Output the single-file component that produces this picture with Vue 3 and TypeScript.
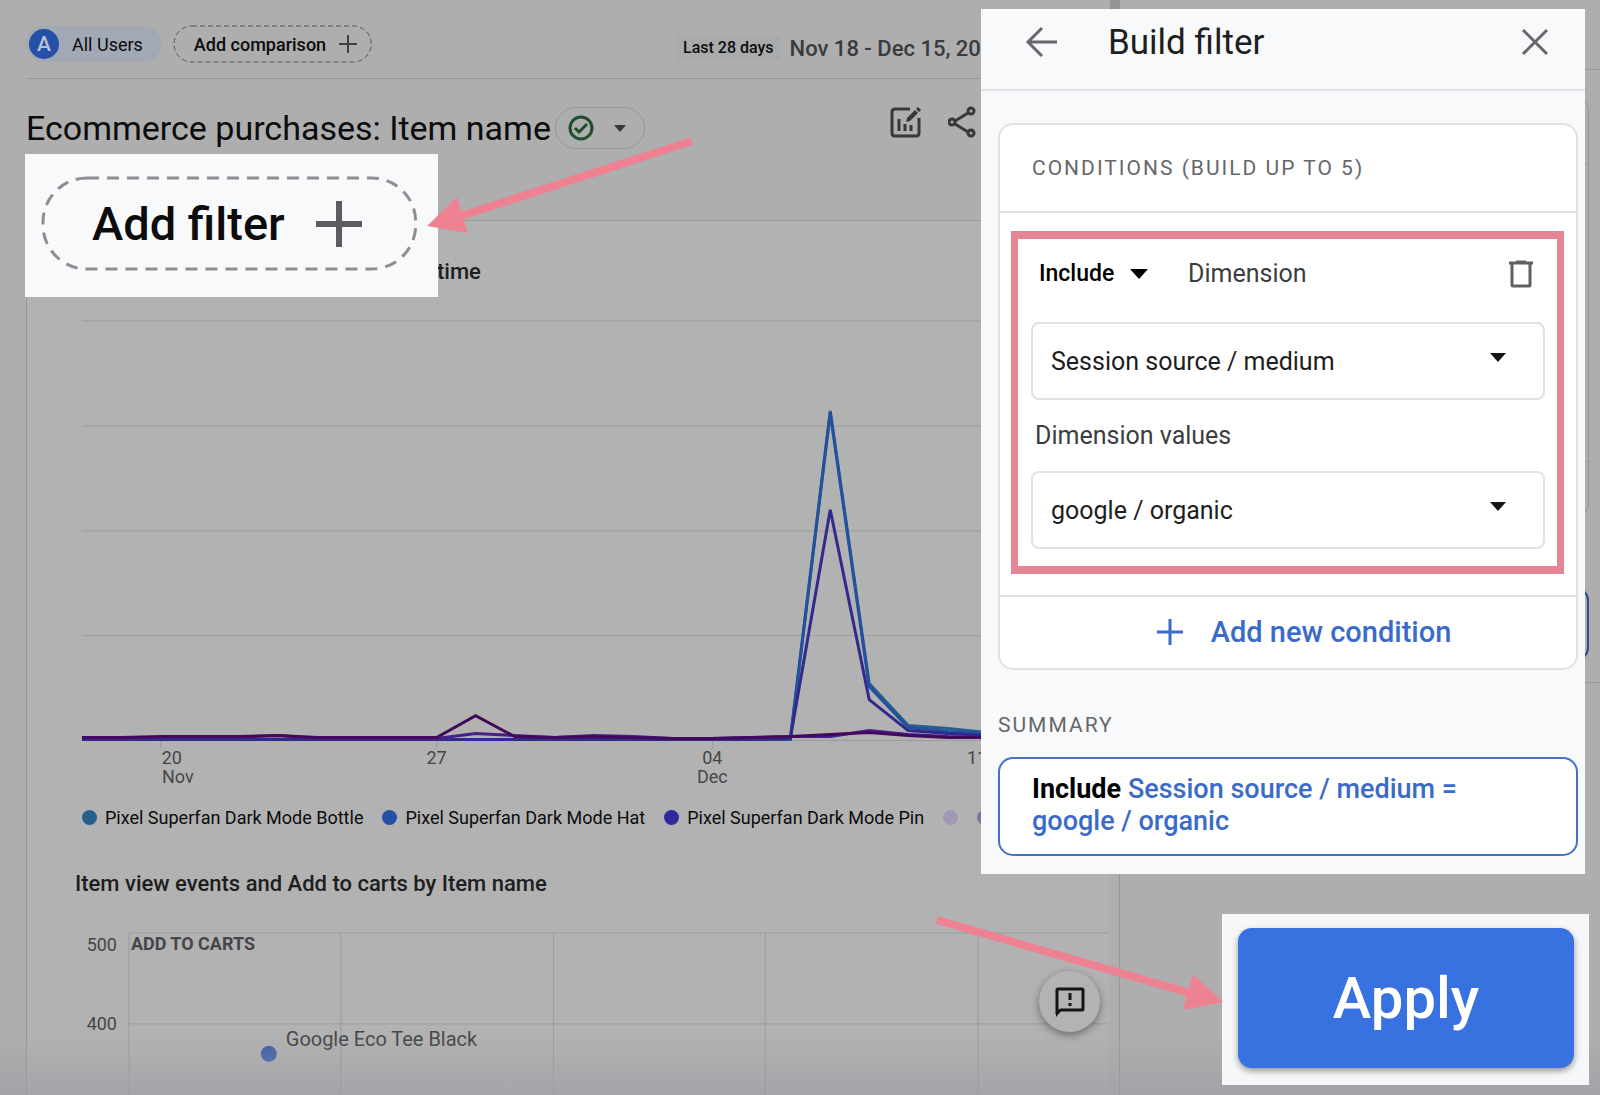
<script setup lang="ts">
import { ref } from 'vue'

interface Series {
  name: string
  color: string
  points: number[]
}

const firstDay = 82
const dayStep = 394
const x = (i: number): number => Math.round(firstDay + (i * dayStep) / 10)

const flat = (n: number, y: number): number[] => Array.from({ length: n }, () => y)

/* Daily heights, Nov 18 to Dec 14 */
const series: Series[] = [
  { name: 'Bottle', color: '#255f8f', points: [...flat(19, 740), 411, 684, 726, 729, 733, 736, 737, 738] },
  { name: 'Hat', color: '#24509c', points: [...flat(19, 740), 413, 687, 728, 732, 734, 736, 737, 738] },
  { name: 'Pin', color: '#312a8c', points: [...flat(18, 740), 739, 510, 700, 731, 734, 736, 737, 738, 738] },
  {
    name: 'Tote',
    color: '#45208a',
    points: [739, 739, 738, 738, 737, 736, 739, 739, 739, 739, 734, 736, 738, 736, 737, 739, 739, 738, 737, 737, 731, 735, 737, 738, 738, 738, 738],
  },
  {
    name: 'Tee',
    color: '#430a5c',
    points: [738, 738, 737, 737, 737, 736, 738, 738, 738, 738, 716, 737, 738, 737, 738, 739, 739, 738, 737, 735, 733, 736, 738, 738, 738, 738, 738],
  },
]

const toPoints = (s: Series): string => s.points.map((y, i) => `${x(i)},${y}`).join(' ')

const gridY = [321, 426, 531, 636, 741]
const ticks = [
  { x: 172, tick: 161, day: '20', month: 'Nov', monthX: 178 },
  { x: 437, tick: 437, day: '27', month: '', monthX: 437 },
  { x: 713, tick: 713, day: '04', month: 'Dec', monthX: 713 },
  { x: 978, tick: 987, day: '11', month: '', monthX: 978 },
]
const legend = [
  { label: 'Pixel Superfan Dark Mode Bottle', color: '#255f8f' },
  { label: 'Pixel Superfan Dark Mode Hat', color: '#2450a8' },
  { label: 'Pixel Superfan Dark Mode Pin', color: '#3029a0' },
  { label: '', color: '#a198b4' },
]
const scatterX = [129, 341, 554, 766, 979]

const mode = ref('Include')
const dimension = ref('Session source / medium')
const value = ref('google / organic')
</script>

<template>
  <div class="page">
    <main class="report">
      <header class="topbar">
        <button class="users" type="button"><span class="avatar">A</span>All Users</button>
        <button class="comparison" type="button">
          <svg class="dash" aria-hidden="true"><rect x="1" y="1" rx="18" /></svg>
          Add comparison
          <svg width="18" height="18" viewBox="0 0 18 18" aria-hidden="true"><path d="M9 0V18M0 9H18" stroke="#3f4043" stroke-width="2" /></svg>
        </button>
        <div class="dates">
          <span class="range">Last 28 days</span>
          <span class="span">Nov 18 - Dec 15, 2023</span>
        </div>
      </header>

      <div class="titlebar">
        <h1>Ecommerce purchases: Item name</h1>
        <button class="status" type="button" aria-label="Report status">
          <svg width="26" height="26" viewBox="0 0 26 26" fill="none" stroke="#1f4d2a" stroke-width="3" aria-hidden="true">
            <circle cx="13" cy="13" r="11" />
            <path d="M7 13L11 17L19 9" />
          </svg>
          <svg width="12" height="7" viewBox="0 0 12 7" aria-hidden="true"><path d="M0 0H12L6 7Z" fill="#37383b" /></svg>
        </button>
        <div class="tools">
          <button class="icon" type="button" aria-label="Edit comparisons">
            <svg width="32" height="32" viewBox="0 0 32 32" fill="none" stroke="#37383b" aria-hidden="true">
              <path d="M20 3H5Q2 3 2 6V27Q2 30 5 30H26Q29 30 29 27V12" stroke-width="3" />
              <path d="M9 13V25M15 18V25M21 19V25" stroke-width="3" />
              <path d="M16 16L17 12L25 4L28 7L20 15Z" fill="#37383b" stroke="none" />
              <path d="M26 3L28 1L31 4L29 6Z" fill="#37383b" stroke="none" />
            </svg>
          </button>
          <button class="icon" type="button" aria-label="Share">
            <svg width="28" height="32" viewBox="0 0 28 32" fill="none" stroke="#37383b" stroke-width="3" aria-hidden="true">
              <path d="M7 15L20 7M7 18L20 26" />
              <circle cx="4" cy="16" r="3" />
              <circle cx="23" cy="5" r="3" />
              <circle cx="23" cy="27" r="3" />
            </svg>
          </button>
        </div>
      </div>

      <section class="card">
        <h2 class="over">time</h2>
        <svg class="chart" viewBox="27 300 1083 480" role="img" aria-label="Item views over time">
          <line v-for="y in gridY" :key="y" x1="82" x2="1109" :y1="y" :y2="y" class="grid" />
          <line v-for="t in ticks" :key="t.day" :x1="t.tick" :x2="t.tick" y1="741" y2="749" class="grid" />
          <polyline v-for="s in series" :key="s.name" :points="toPoints(s)" :stroke="s.color" class="line" />
          <g v-for="t in ticks" :key="t.day" class="axis" text-anchor="middle">
            <text :x="t.x" y="764">{{ t.day }}</text>
            <text v-if="t.month" :x="t.monthX" y="783">{{ t.month }}</text>
          </g>
        </svg>
        <ul class="legend">
          <li v-for="(l, i) in legend" :key="i">
            <span class="dot" :style="{ background: l.color }"></span>
            <span v-if="l.label">{{ l.label }}</span>
          </li>
          <li><span class="dot more"></span></li>
        </ul>
        <h2>Item view events and Add to carts by Item name</h2>
        <svg class="chart" viewBox="27 900 1083 240" role="img" aria-label="Item view events and Add to carts">
          <line x1="129" x2="1109" y1="933" y2="933" class="grid" />
          <line x1="129" x2="1109" y1="1024" y2="1024" class="grid" />
          <line v-for="g in scatterX" :key="g" :x1="g" :x2="g" y1="933" y2="1140" class="grid" />
          <g class="axis">
            <text x="117" y="951" text-anchor="end">500</text>
            <text x="117" y="1030" text-anchor="end">400</text>
            <text x="131" y="950" class="strong">ADD TO CARTS</text>
            <text x="286" y="1046" class="point">Google Eco Tee Black</text>
          </g>
          <circle cx="269" cy="1054" r="8" fill="#3f5fa8" />
        </svg>
      </section>
      <button class="feedback" type="button" aria-label="Send feedback">
        <svg width="32" height="32" viewBox="0 0 32 32" fill="none" stroke="#151515" stroke-width="3" aria-hidden="true">
          <path d="M3 26V4Q3 3 4 3H28Q29 3 29 4V23Q29 24 28 24H7Z" />
          <path d="M2 31V24L8 24Z" fill="#151515" stroke="none" />
          <path d="M16 7V14M16 17V20" />
        </svg>
      </button>
    </main>

    <aside class="side">
      <div class="side-head"></div>
      <div class="side-body">
        <div class="side-card"><div></div></div>
        <div class="side-box"></div>
      </div>
    </aside>
    <div class="shade"></div>

    <div class="add-filter">
      <button type="button">
        <svg class="dash" aria-hidden="true"><rect x="2" y="2" rx="44" /></svg>
        Add filter
        <svg width="46" height="46" viewBox="0 0 46 46" aria-hidden="true"><path d="M23 0V46M0 23H46" stroke="#5b5d61" stroke-width="6" /></svg>
      </button>
    </div>

    <section class="panel">
      <header class="panel-head">
        <button class="icon" type="button" aria-label="Back">
          <svg width="32" height="32" viewBox="0 0 32 32" fill="none" stroke="#66676a" stroke-width="3" aria-hidden="true"><path d="M32 16H3M17 2L3 16L17 30" /></svg>
        </button>
        <h2>Build filter</h2>
        <button class="icon" type="button" aria-label="Close">
          <svg width="28" height="28" viewBox="0 0 28 28" fill="none" stroke="#66676a" stroke-width="3" aria-hidden="true"><path d="M2 2L26 26M26 2L2 26" /></svg>
        </button>
      </header>
      <div class="panel-body">
        <div class="conditions">
          <h3 class="caps">CONDITIONS (BUILD UP TO 5)</h3>
          <div class="condition-wrap">
            <div class="condition">
              <div class="row">
                <label class="mode">
                  <select v-model="mode" aria-label="Condition type">
                    <option>Include</option>
                    <option>Exclude</option>
                  </select>
                  <svg width="18" height="10" viewBox="0 0 18 10" aria-hidden="true"><path d="M0 0H18L9 10Z" fill="#000" /></svg>
                </label>
                <label class="dim" for="dimension">Dimension</label>
                <button class="icon" type="button" aria-label="Delete condition">
                  <svg width="24" height="28" viewBox="0 0 24 28" fill="none" stroke="#5f6063" stroke-width="3" aria-hidden="true"><path d="M0 3H24M7 2H17M3 3V25Q3 26 4 26H20Q21 26 21 25V3" /></svg>
                </button>
              </div>
              <div class="field">
                <select id="dimension" v-model="dimension"><option>Session source / medium</option></select>
                <svg width="16" height="9" viewBox="0 0 16 9" aria-hidden="true"><path d="M0 0H16L8 9Z" fill="#151515" /></svg>
              </div>
              <label class="values" for="values">Dimension values</label>
              <div class="field">
                <select id="values" v-model="value"><option>google / organic</option></select>
                <svg width="16" height="9" viewBox="0 0 16 9" aria-hidden="true"><path d="M0 0H16L8 9Z" fill="#151515" /></svg>
              </div>
            </div>
          </div>
          <button class="add-condition" type="button">
            <svg width="26" height="26" viewBox="0 0 26 26" aria-hidden="true"><path d="M13 0V26M0 13H26" stroke="#3a6bcb" stroke-width="3" /></svg>
            Add new condition
          </button>
        </div>
        <h3 class="caps summary-title">SUMMARY</h3>
        <p class="summary"><b>Include</b> <span>{{ dimension }} =</span><br /><span>{{ value }}</span></p>
      </div>
    </section>

    <div class="apply"><button type="button">Apply</button></div>

    <svg class="arrow first" width="270" height="100" viewBox="425 135 270 100" aria-hidden="true">
      <path d="M692 141L455 218" stroke="#ee8292" stroke-width="8" />
      <path d="M427 226L457 197L468 233Z" fill="#ee8292" />
    </svg>
    <svg class="arrow second" width="292" height="100" viewBox="933 912 292 100" aria-hidden="true">
      <path d="M937 920L1190 993" stroke="#ee8292" stroke-width="8" />
      <path d="M1223 1002L1193 974L1183 1010Z" fill="#ee8292" />
    </svg>
  </div>
</template>

<style>
body {
  margin: 0;
  background: #aeaeae;
}
</style>

<style scoped>
.page {
  position: relative;
  display: flex;
  height: 100vh;
  min-height: 1095px;
  overflow: hidden;
  background: #aeaeae;
  color: #0c0c0d;
  font-family: Roboto, sans-serif;
  font-size: 18px;
}
.page * {
  box-sizing: border-box;
}
button,
select {
  margin: 0;
  padding: 0;
  border: 0;
  background: none;
  color: inherit;
  font: inherit;
}
h1,
h2,
h3,
p,
ul {
  margin: 0;
  padding: 0;
}
svg {
  display: block;
  flex: none;
}
.icon {
  display: flex;
}

.report {
  position: relative;
  display: flex;
  flex-direction: column;
  flex: 0 0 70%;
  padding: 0 10px 0 26px;
  border-right: 1px solid #98989a;
}
.report::after {
  content: '';
  position: absolute;
  top: 0;
  right: 0;
  width: 9px;
  height: 120px;
  background: #949496;
}
.topbar {
  display: flex;
  align-items: center;
  height: 79px;
  padding-top: 10px;
  border-bottom: 1px solid #98989a;
  white-space: nowrap;
}
.users {
  display: flex;
  align-items: center;
  gap: 13px;
  height: 36px;
  padding: 0 18px 0 3px;
  border-radius: 18px;
  background: #a2a8b4;
}
.avatar {
  width: 30px;
  border-radius: 50%;
  background: #2450a8;
  color: #b9c3d6;
  font-size: 21px;
  font-weight: 500;
  line-height: 30px;
}
.comparison {
  position: relative;
  display: flex;
  align-items: center;
  gap: 13px;
  height: 38px;
  margin-left: 12px;
  padding: 0 15px 0 21px;
  font-weight: 500;
}
.dash {
  position: absolute;
  inset: 0;
  width: 100%;
  height: 100%;
}
.dash rect {
  width: calc(100% - 2px);
  height: calc(100% - 2px);
  fill: none;
  stroke: #58595c;
  stroke-width: 1px;
  stroke-dasharray: 5 3;
}
.dates {
  display: flex;
  align-items: center;
  gap: 10px;
  width: 432px;
  margin-left: auto;
  padding-top: 8px;
}
.range {
  padding: 0 6px;
  background: #a9aaab;
  font-size: 16px;
  font-weight: 500;
  line-height: 24px;
}
.span {
  color: #3a3b3e;
  font-size: 22px;
  font-weight: 500;
}
.titlebar {
  display: flex;
  align-items: center;
  height: 98px;
}
h1 {
  font-size: 34px;
  font-weight: 400;
  line-height: 40px;
  white-space: nowrap;
}
.status {
  display: flex;
  align-items: center;
  gap: 20px;
  height: 42px;
  margin-left: 4px;
  padding: 0 18px 0 12px;
  border: 1px solid #98989a;
  border-radius: 21px;
}
.tools {
  display: flex;
  gap: 26px;
  width: 219px;
  margin: 0 0 12px auto;
}
.card {
  flex: 1;
  margin-top: 43px;
  border-top: 1px solid #98989a;
  border-left: 1px solid #98989a;
  background: #b2b2b2;
  overflow: hidden;
}
.card h2 {
  padding-left: 48px;
  color: #1d1e20;
  font-size: 22px;
  font-weight: 500;
  line-height: 32px;
}
.card .over {
  padding: 35px 0 12px 410px;
}
.chart {
  width: 100%;
  overflow: visible;
}
.grid {
  stroke: #9c9d9f;
  stroke-width: 1px;
}
.line {
  fill: none;
  stroke-width: 3px;
}
.axis {
  fill: #454649;
  font-size: 18px;
}
.axis .strong {
  font-weight: 700;
}
.axis .point {
  font-size: 20px;
}
.legend {
  display: flex;
  gap: 19px;
  padding: 20px 0 32px 55px;
  line-height: 36px;
  white-space: nowrap;
  list-style: none;
}
.legend li {
  display: flex;
  align-items: center;
  gap: 8px;
}
.dot {
  flex: none;
  width: 15px;
  height: 15px;
  border-radius: 50%;
}
.dot.more {
  background: #7d74a0;
}
.feedback {
  position: absolute;
  top: 971px;
  right: 19px;
  display: grid;
  place-items: center;
  width: 61px;
  height: 61px;
  border-radius: 50%;
  background: #b3b3b3;
  box-shadow: 0 3px 8px #00000066;
}

.side {
  flex: 1;
}
.side-head {
  height: 70px;
  border-bottom: 1px solid #98989a;
}
.side-body {
  height: 613px;
  padding: 28px 11px 0 20px;
  border-bottom: 1px solid #98989a;
}
.side-card {
  height: 418px;
  padding: 65px 0 53px;
  border: 1px solid #98989a;
  border-radius: 12px;
}
.side-card div {
  height: 100%;
  border: solid #98989a;
  border-width: 1px 0;
}
.side-box {
  height: 72px;
  margin-top: 72px;
  border: 2px solid #2a4f96;
  border-radius: 12px;
}
.shade {
  position: absolute;
  inset: auto 0 0 0;
  height: 60px;
  background: linear-gradient(#9c9ca400, #9c9ca499);
}

.add-filter {
  position: absolute;
  top: 154px;
  left: 25px;
  padding: 22px 20px 26px 16px;
  background: #f8f9fb;
}
.add-filter button {
  position: relative;
  display: flex;
  align-items: center;
  gap: 31px;
  height: 95px;
  padding: 0 56px 0 51px;
  font-size: 47px;
  font-weight: 500;
  white-space: nowrap;
}
.add-filter .dash rect {
  width: calc(100% - 4px);
  height: calc(100% - 4px);
  stroke: #8d8e91;
  stroke-width: 3px;
  stroke-dasharray: 12 8;
}

.panel {
  position: absolute;
  top: 9px;
  right: 15px;
  left: calc(70% - 139px);
  height: 865px;
  background: #f8f9fb;
}
.panel-head {
  display: flex;
  align-items: center;
  height: 82px;
  padding: 0 36px 14px 44px;
  border-bottom: 2px solid #e0e1e4;
}
.panel-head h2 {
  flex: 1;
  margin-left: 51px;
  color: #1d1e20;
  font-size: 35px;
  font-weight: 400;
}
.panel-body {
  padding: 32px 7px 0 17px;
}
.conditions {
  border: 2px solid #e0e1e4;
  border-radius: 15px;
  background: #fff;
}
.caps {
  color: #66676a;
  font-size: 21px;
  font-weight: 400;
  line-height: 28px;
  letter-spacing: 2px;
}
.conditions .caps {
  padding: 29px 32px;
}
.condition-wrap {
  padding: 18px 12px 21px 11px;
  border: solid #e0e1e4;
  border-width: 2px 0;
}
.condition {
  padding: 16px 12px 17px 13px;
  border: solid #e68593;
  border-width: 8px 7px;
}
.row {
  display: flex;
  align-items: center;
  height: 52px;
  margin-bottom: 15px;
  padding: 0 12px 15px 8px;
  color: #3c3d40;
  font-size: 25px;
}
.mode {
  display: flex;
  align-items: center;
  gap: 10px;
  color: #000;
  font-size: 23px;
  font-weight: 500;
}
select {
  appearance: none;
}
.dim {
  flex: 1;
  margin-left: 40px;
}
.field {
  position: relative;
}
.field select {
  display: block;
  width: 100%;
  height: 78px;
  padding: 0 18px;
  border: 2px solid #e0e1e4;
  border-radius: 8px;
  background: #fff;
  color: #1d1e20;
  font-size: 25px;
}
.field svg {
  position: absolute;
  top: 31px;
  right: 39px;
}
.values {
  display: block;
  padding: 20px 0 19px 4px;
  color: #3c3d40;
  font-size: 25px;
  line-height: 32px;
}
.add-condition {
  display: flex;
  align-items: center;
  justify-content: center;
  gap: 28px;
  width: 100%;
  height: 71px;
  padding: 0 0 2px 32px;
  color: #3a6bcb;
  font-size: 29px;
  font-weight: 500;
}
.summary-title {
  padding: 41px 0 18px;
}
.summary {
  padding: 14px 32px 17px;
  border: 2px solid #4671c6;
  border-radius: 15px;
  background: #fff;
  color: #3a6bcb;
  font-size: 27px;
  font-weight: 500;
  line-height: 32px;
}
.summary b {
  color: #000;
  font-weight: 700;
}

.apply {
  position: absolute;
  top: 914px;
  right: 11px;
  width: 367px;
  padding: 14px 15px 17px 16px;
  background: #f6f7f9;
}
.apply button {
  width: 100%;
  height: 140px;
  border-radius: 14px;
  background: #3871e0;
  box-shadow: 0 3px 6px #00000066;
  color: #fff;
  font-size: 58px;
  font-weight: 500;
}

.arrow {
  position: absolute;
  pointer-events: none;
}
.first {
  top: 135px;
  left: 425px;
}
.second {
  top: 912px;
  right: 375px;
}
</style>
